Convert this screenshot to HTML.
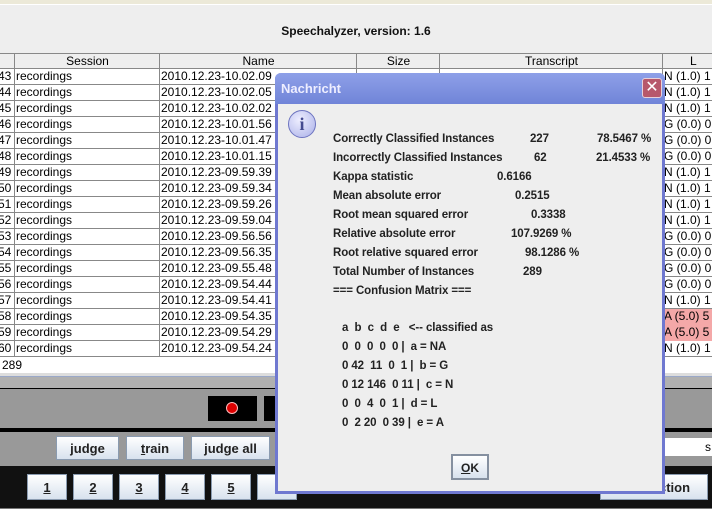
<!DOCTYPE html>
<html><head><meta charset="utf-8"><style>
*{margin:0;padding:0;box-sizing:border-box}
body{width:712px;height:517px;overflow:hidden;background:#eeeeee;font-family:"Liberation Sans",sans-serif;position:relative}
.a{position:absolute}
.tbl{font-size:12px;color:#000}
.row{position:absolute;left:0;width:712px;height:16px;background:#fff;border-bottom:1px solid #888}
.c{position:absolute;top:0;height:16px;line-height:15px;border-right:1px solid #888;padding-left:1px;white-space:nowrap;overflow:hidden}
.btn{position:absolute;background:linear-gradient(#fff,#d8e2ee);border:1px solid #8a9bb0;font-weight:bold;font-size:13px;text-align:center;color:#222}
.d{position:absolute;font-weight:bold;font-size:11.5px;color:#222;white-space:pre;letter-spacing:-0.1px}
</style></head><body>
<div class="a" style="left:0;top:0;width:712px;height:5px;background:#ece9d8;border-bottom:1px solid #fff"></div>
<div class="a" style="left:0;top:24px;width:712px;text-align:center;font-weight:bold;font-size:12px;color:#111">Speechalyzer, version: 1.6</div>

<div class="tbl">
<div class="row" style="top:53px;background:#eeeeee;border-top:1px solid #888">
<div class="c" style="left:0;width:15px"></div>
<div class="c" style="left:15px;width:145px;text-align:center">Session</div>
<div class="c" style="left:160px;width:197px;text-align:center">Name</div>
<div class="c" style="left:357px;width:83px;text-align:center">Size</div>
<div class="c" style="left:440px;width:223px;text-align:center">Transcript</div>
<div class="c" style="left:663px;width:60px;padding-left:27px">L</div>
</div>
</div>
<div id="rows" class="tbl"></div>
<div class="a tbl" style="left:0;top:357px;width:712px;height:16px;background:#fff;font-size:12px;line-height:16px;padding-left:2px">289</div>
<div class="a" style="left:0;top:373px;width:712px;height:15px;background:#b0b0b0;border-top:3px solid #ddd"></div>
<div class="a" style="left:0;top:376px;width:712px;height:1px;background:#9aa8c8"></div>
<div class="a" style="left:0;top:388px;width:712px;height:1px;background:#000"></div>
<div class="a" style="left:0;top:389px;width:712px;height:39px;background:#999"></div>
<div class="a" style="left:208px;top:396px;width:49px;height:25px;background:#000"></div>
<div class="a" style="left:226px;top:402px;width:12px;height:12px;border-radius:50%;background:#d00;border:1px solid #fbb"></div>
<div class="a" style="left:264px;top:396px;width:20px;height:25px;background:#000"></div>
<div class="a" style="left:0;top:428px;width:712px;height:4px;background:#000"></div>
<div class="a" style="left:0;top:432px;width:712px;height:34px;background:#999"></div>
<div class="btn" style="left:56px;top:436px;width:63px;height:24px;line-height:23px"><u>j</u>udge</div>
<div class="btn" style="left:126px;top:436px;width:58px;height:24px;line-height:23px"><u>t</u>rain</div>
<div class="btn" style="left:191px;top:436px;width:79px;height:24px;line-height:23px">judge all</div>
<div class="a" style="left:660px;top:438px;width:52px;height:18px;background:#fff;font-size:12px;line-height:18px;padding-left:45px">s</div>
<div class="a" style="left:0;top:466px;width:712px;height:42px;background:#111"></div>
<div class="btn" style="left:27px;top:474px;width:40px;height:26px;line-height:26px"><u>1</u></div>
<div class="btn" style="left:73px;top:474px;width:40px;height:26px;line-height:26px"><u>2</u></div>
<div class="btn" style="left:119px;top:474px;width:40px;height:26px;line-height:26px"><u>3</u></div>
<div class="btn" style="left:165px;top:474px;width:40px;height:26px;line-height:26px"><u>4</u></div>
<div class="btn" style="left:211px;top:474px;width:40px;height:26px;line-height:26px"><u>5</u></div>
<div class="btn" style="left:257px;top:474px;width:40px;height:26px"></div>
<div class="btn" style="left:600px;top:474px;width:108px;height:26px;line-height:26px;text-align:left;padding-left:58px">ction</div>
<div class="a" style="left:0;top:508px;width:712px;height:9px;background:#fff;border-top:1px solid #777"></div>

<!-- dialog -->
<div class="a" style="left:275px;top:73px;width:390px;height:421px;background:#eeeeee;border:3px solid #6f78d0;border-top:none;border-radius:6px 6px 0 0"></div>
<div class="a" style="left:275px;top:73px;width:390px;height:31px;background:linear-gradient(#8ea0e8,#7084d8);border-radius:6px 6px 0 0"></div>
<div class="a" style="left:281px;top:81px;font-weight:bold;font-size:13px;color:#eef">Nachricht</div>
<div class="a" style="left:642px;top:78px;width:20px;height:20px;background:#b7586b;border:1px solid #e8d0d8;border-radius:3px;color:#fff;font-size:16px;line-height:18px;text-align:center">✕</div>
<div class="a" style="left:288px;top:110px;width:28px;height:28px;border-radius:50%;background:radial-gradient(circle at 40% 35%,#eef,#aab0e8);border:1px solid #6d74c0;color:#444a90;font-weight:bold;font-size:18px;line-height:26px;text-align:center;font-family:'Liberation Serif',serif">i</div>

<div class="d" style="left:333px;top:133px">Correctly Classified Instances</div><div class="d" style="left:530px;top:133px">227</div><div class="d" style="left:597px;top:133px">78.5467 %</div>
<div class="d" style="left:333px;top:152px">Incorrectly Classified Instances</div><div class="d" style="left:534px;top:152px">62</div><div class="d" style="left:596px;top:152px">21.4533 %</div>
<div class="d" style="left:333px;top:171px">Kappa statistic</div><div class="d" style="left:497px;top:171px">0.6166</div>
<div class="d" style="left:333px;top:190px">Mean absolute error</div><div class="d" style="left:515px;top:190px">0.2515</div>
<div class="d" style="left:333px;top:209px">Root mean squared error</div><div class="d" style="left:531px;top:209px">0.3338</div>
<div class="d" style="left:333px;top:228px">Relative absolute error</div><div class="d" style="left:511px;top:228px">107.9269 %</div>
<div class="d" style="left:333px;top:247px">Root relative squared error</div><div class="d" style="left:525px;top:247px">98.1286 %</div>
<div class="d" style="left:333px;top:266px">Total Number of Instances</div><div class="d" style="left:523px;top:266px">289</div>
<div class="d" style="left:333px;top:285px">=== Confusion Matrix ===</div>
<div class="d" style="left:342px;top:322px">a  b  c  d  e   &lt;-- classified as</div>
<div class="d" style="left:342px;top:341px">0  0  0  0  0 |  a = NA</div>
<div class="d" style="left:342px;top:360px">0 42  11  0  1 |  b = G</div>
<div class="d" style="left:342px;top:379px">0 12 146  0 11 |  c = N</div>
<div class="d" style="left:342px;top:398px">0  0  4  0  1 |  d = L</div>
<div class="d" style="left:342px;top:417px">0  2 20  0 39 |  e = A</div>
<div class="btn" style="left:451px;top:454px;width:38px;height:26px;line-height:25px;border:2px solid #8590a0;font-size:12px"><u>O</u>K</div>

<script>
var names=["10.02.09","10.02.05","10.02.02","10.01.56","10.01.47","10.01.15","09.59.39","09.59.34","09.59.26","09.59.04","09.56.56","09.56.35","09.55.48","09.54.44","09.54.41","09.54.35","09.54.29","09.54.24"];
var L=["N (1.0) 1","N (1.0) 1","N (1.0) 1","G (0.0) 0","G (0.0) 0","G (0.0) 0","N (1.0) 1","N (1.0) 1","N (1.0) 1","N (1.0) 1","G (0.0) 0","G (0.0) 0","G (0.0) 0","G (0.0) 0","N (1.0) 1","A (5.0) 5","A (5.0) 5","N (1.0) 1"];
var h="";
for(var i=0;i<18;i++){
var pink=L[i][0]=="A";
h+='<div class="row" style="top:'+(69+i*16)+'px"><div class="c" style="left:0;width:15px;text-indent:-3px">'+(43+i)+'</div><div class="c" style="left:15px;width:145px">recordings</div><div class="c" style="left:160px;width:197px">2010.12.23-'+names[i]+'</div><div class="c" style="left:357px;width:83px"></div><div class="c" style="left:440px;width:223px"></div><div class="c" style="left:663px;width:60px;'+(pink?'background:#f4a8a8':'')+'">'+L[i]+'</div></div>';
}
document.getElementById("rows").innerHTML=h;
</script>
</body></html>
